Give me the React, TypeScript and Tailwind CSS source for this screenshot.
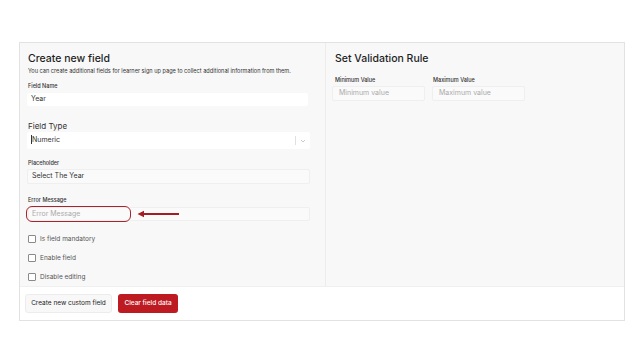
import React from "react";

function Checkbox({ label }: { label: string }) {
  return (
    <div className="flex items-center gap-[4px] h-[10px]">
      <div className="w-[8px] h-[8px] border border-[#8a8a8a] rounded-[1px] bg-white" />
      <span className="text-[6.5px] leading-[10px] text-[#555]">{label}</span>
    </div>
  );
}

export default function App() {
  return (
    <div
      className="w-[644px] h-[362px] bg-white pt-[42px] pl-[19px]"
      style={{ fontFamily: "Inter, 'Liberation Sans', sans-serif" }}
    >
      <div className="w-[606px] h-[279px] border border-[#e2e2e2] flex flex-col bg-white">
        <div className="flex flex-1">
          {/* left panel */}
          <div className="w-[306px] bg-[#f8f8f8] border-r border-[#ececec] pl-[8px] pr-[15px] flex flex-col">
            <div className="pt-[8px] text-[10.5px] leading-[16px] font-medium text-[#1f1f1f]">Create new field</div>
            <div className="text-[5.6px] leading-[8px] text-[#333]">
              You can create additional fields for learner sign up page to collect additional information from them.
            </div>
            <div className="mt-[7px] text-[5.5px] leading-[8px] font-medium text-[#333]">Field Name</div>
            <div className="mt-[3px] h-[13px] bg-white rounded-[2px] flex items-center pl-[4px] text-[7px] text-[#333] mr-[2px] -ml-[1px]">
              Year
            </div>
            <div className="mt-[15px] text-[8px] leading-[10px] text-[#333]">Field Type</div>
            <div className="mt-[1px] h-[17px] bg-white rounded-[2px] flex items-center text-[7px] text-[#333] -ml-[1px]">
              <span className="pl-[4px] flex-1">
                <span className="border-l border-[#333] pl-[0px]">Numeric</span>
              </span>
              <div className="w-px h-[9px] bg-[#e0e0e0]" />
              <svg width="14" height="10" viewBox="0 0 14 10" className="text-[#bbb]">
                <path d="M5 4 L7 6 L9 4" fill="none" stroke="currentColor" strokeWidth="0.8" />
              </svg>
            </div>
            <div className="mt-[10px] text-[5.5px] leading-[8px] font-medium text-[#333]">Placeholder</div>
            <div className="mt-[2px] h-[15px] bg-[#fafafa] border border-[#efefef] rounded-[2px] flex items-center pl-[4px] text-[7px] text-[#333] -ml-[1px]">
              Select The Year
            </div>
            <div className="mt-[12px] text-[5.5px] leading-[8px] font-medium text-[#333]">Error Message</div>
            <div className="relative mt-[2px] h-[16px] -ml-[2px]">
              <div className="absolute left-[2px] right-0 top-[1px] h-[14px] bg-[#fafafa] border border-[#efefef] rounded-[2px]" />
              <div className="absolute left-0 top-0 w-[105px] h-[16px] border-[1.5px] border-[#a8232c] rounded-[6px] flex items-center pl-[5px] text-[7px] text-[#aaa]">
                Error Message
              </div>
              <svg className="absolute left-[111px] top-[4px]" width="44" height="8" viewBox="0 0 44 8">
                <path d="M6 4 H42" stroke="#a31d24" strokeWidth="1.8" />
                <path d="M0.5 4 L7 0.8 L7 7.2 Z" fill="#a31d24" />
              </svg>
            </div>
            <div className="mt-[12px] flex flex-col gap-[9px]">
              <Checkbox label="Is field mandatory" />
              <Checkbox label="Enable field" />
              <Checkbox label="Disable editing" />
            </div>
          </div>
          {/* right panel */}
          <div className="flex-1 bg-[#f8f8f8] pl-[9px] flex flex-col">
            <div className="pt-[8px] text-[10.5px] leading-[16px] font-medium text-[#1f1f1f]">Set Validation Rule</div>
            <div className="flex gap-[8px] mt-[9px]">
              <div className="flex flex-col">
                <div className="text-[5.5px] leading-[8px] font-medium text-[#333]">Minimum Value</div>
                <div className="mt-[2px] w-[93px] h-[15px] border border-[#efefef] bg-[#fafafa] rounded-[2px] -ml-[3px] flex items-center pl-[6px] text-[7px] text-[#aaa]">
                  Minimum value
                </div>
              </div>
              <div className="flex flex-col">
                <div className="text-[5.5px] leading-[8px] font-medium text-[#333]">Maximum Value</div>
                <div className="mt-[2px] w-[93px] h-[15px] border border-[#efefef] bg-[#fafafa] rounded-[2px] -ml-[1px] flex items-center pl-[6px] text-[7px] text-[#aaa]">
                  Maximum value
                </div>
              </div>
            </div>
          </div>
        </div>
        {/* footer */}
        <div className="h-[34px] bg-white border-t border-[#efefef] flex items-center gap-[6px] pl-[5px]">
          <div className="h-[19px] w-[87px] bg-[#f8f8f8] border border-[#ececec] rounded-[3px] flex items-center justify-center text-[6.5px] text-[#222]">
            Create new custom field
          </div>
          <div className="h-[19px] w-[60px] bg-[#bd1a21] rounded-[3px] flex items-center justify-center text-[6.5px] font-medium text-white">
            Clear field data
          </div>
        </div>
      </div>
    </div>
  );
}
